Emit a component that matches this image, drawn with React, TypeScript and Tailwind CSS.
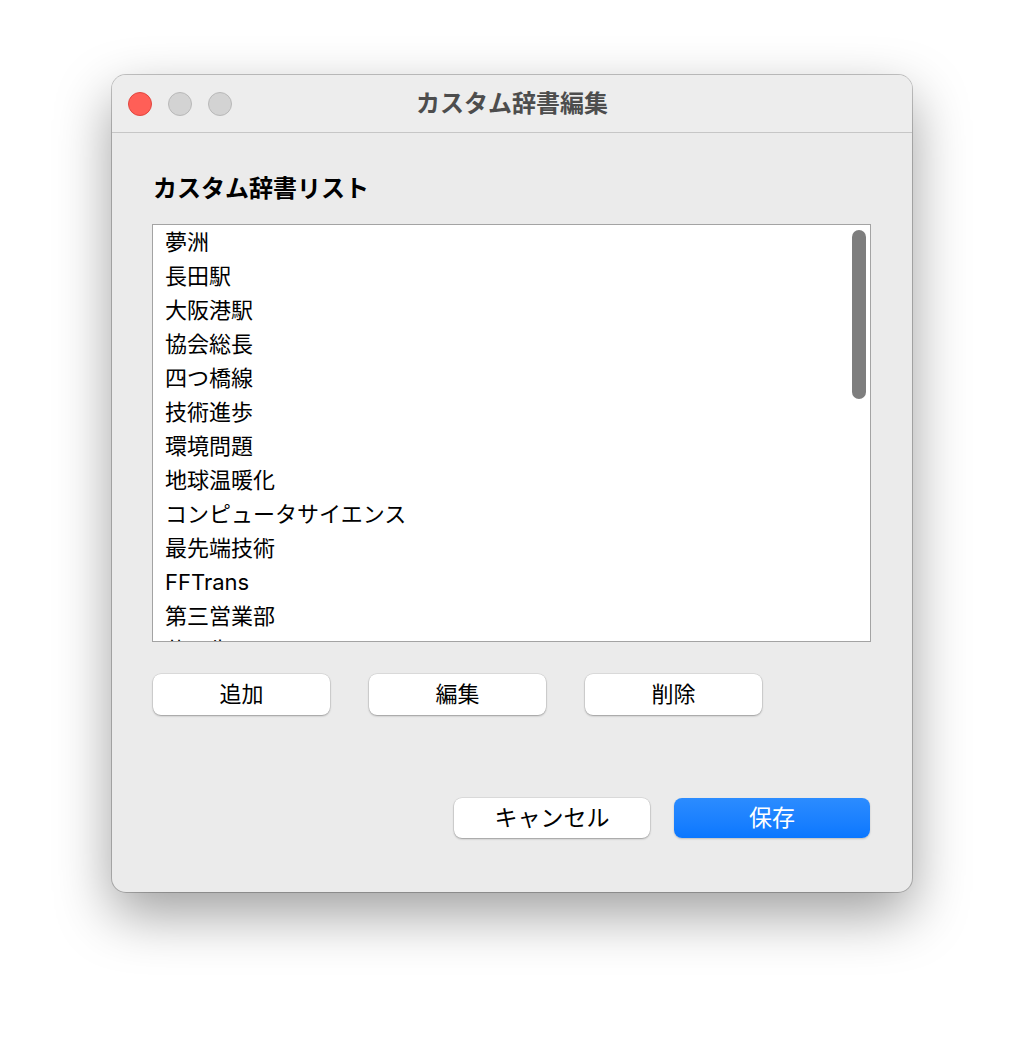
const words = [
  "夢洲",
  "長田駅",
  "大阪港駅",
  "協会総長",
  "四つ橋線",
  "技術進歩",
  "環境問題",
  "地球温暖化",
  "コンピュータサイエンス",
  "最先端技術",
  "FFTrans",
  "第三営業部",
  "仕入先",
];

function TrafficLights() {
  return (
    <div className="flex items-center gap-4">
      <span className="h-6 w-6 rounded-full border border-[#e2463f] bg-[#ff5f57]" />
      <span className="h-6 w-6 rounded-full border border-[#b9b9b9] bg-[#d3d3d3]" />
      <span className="h-6 w-6 rounded-full border border-[#b9b9b9] bg-[#d3d3d3]" />
    </div>
  );
}

function SmallButton({ label }: { label: string }) {
  return (
    <button className="h-[41px] w-[177px] rounded-[8px] bg-white text-[22px] text-black shadow-[0_0_0_0.5px_rgba(0,0,0,0.12),0_1px_2px_rgba(0,0,0,0.3)]">
      {label}
    </button>
  );
}

export default function App() {
  return (
    <div className="min-h-[1040px] bg-white pl-[112px] pt-[75px] font-['Inter','Noto_Sans_CJK_JP',sans-serif]">
      <div className="w-[800px] overflow-hidden rounded-[14px] bg-[#ebebeb] shadow-[0_0_0_1px_rgba(0,0,0,0.22),0_22px_55px_rgba(0,0,0,0.38)]">
        {/* title bar */}
        <div className="relative flex h-[58px] items-center border-b border-[#c6c6c6] bg-[#ededed] px-4">
          <TrafficLights />
          <div className="absolute inset-0 flex items-center justify-center text-[24px] font-bold text-[#4d4d4d]">
            カスタム辞書編集
          </div>
        </div>

        <div className="pl-10 pr-[41px] pb-[54px] pt-[41px]">
          <h2 className="mb-[20px] pl-px text-[24px] leading-[30px] font-bold text-black">カスタム辞書リスト</h2>

          <div className="relative h-[418px] overflow-hidden border border-[#a3a3a3] bg-white">
            <ul className="pl-3">
              {words.map((w) => (
                <li key={w} className="text-[22px] leading-[34px] text-black">
                  {w}
                </li>
              ))}
            </ul>
            <div className="absolute right-[4px] top-[5px] h-[169px] w-[14px] rounded-full bg-[#7e7e7e]" />
          </div>

          <div className="mt-[32px] flex gap-[39px] pl-px">
            <SmallButton label="追加" />
            <SmallButton label="編集" />
            <SmallButton label="削除" />
          </div>

          <div className="mt-[83px] flex justify-end gap-6 pr-px">
            <button className="h-[40px] w-[196px] rounded-[8px] bg-white text-[23px] text-black shadow-[0_0_0_0.5px_rgba(0,0,0,0.12),0_1px_2px_rgba(0,0,0,0.3)]">
              キャンセル
            </button>
            <button className="h-[40px] w-[196px] rounded-[8px] bg-gradient-to-b from-[#2b8cff] to-[#0a77ff] text-[23px] text-white shadow-[0_1px_2px_rgba(0,0,0,0.2)]">
              保存
            </button>
          </div>
        </div>
      </div>
    </div>
  );
}
